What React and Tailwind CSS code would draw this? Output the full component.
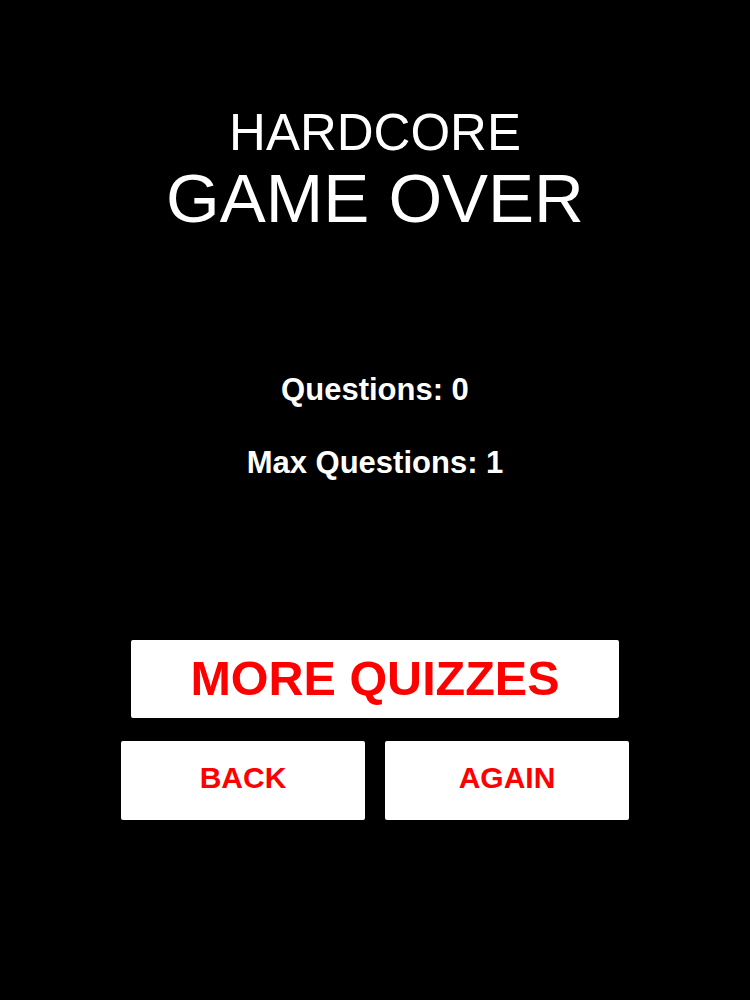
import React from 'react';

const Button = ({ label, className }) => (
  <button
    className={`flex items-center justify-center bg-white rounded-[2px] font-bold leading-none text-[#f00] ${className}`}
  >
    {label}
  </button>
);

const App = () => {
  return (
    <div
      className="min-h-screen w-full bg-black flex flex-col items-center pt-[107px] text-white"
      style={{ fontFamily: '"Liberation Sans", Arial, sans-serif' }}
    >
      {/* Title */}
      <h2 className="text-[51px] leading-none">HARDCORE</h2>
      <h1 className="mt-[6px] text-[69px] leading-none">GAME OVER</h1>

      {/* Stats */}
      <p className="mt-[141px] text-[31px] font-bold leading-none">Questions: 0</p>
      <p className="mt-[42px] text-[31px] font-bold leading-none">Max Questions: 1</p>

      {/* Actions */}
      <div className="mt-[162px] flex flex-col items-center">
        <Button label="MORE QUIZZES" className="w-[488px] h-[78px] pb-[1px] text-[48.5px]" />
        <div className="mt-[23px] flex gap-[20px]">
          <Button label="BACK" className="w-[244px] h-[79px] pb-[6px] text-[30px]" />
          <Button label="AGAIN" className="w-[244px] h-[79px] pb-[6px] text-[30px]" />
        </div>
      </div>
    </div>
  );
};

export default App;
